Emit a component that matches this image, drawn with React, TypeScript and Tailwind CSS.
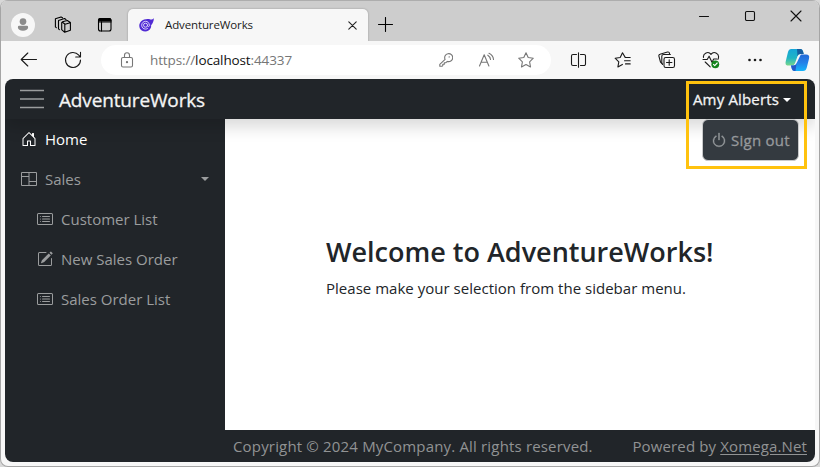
import type { ReactNode } from "react";
import { BsHouseDoor, BsColumns, BsCardList, BsPencilSquare, BsPower } from "react-icons/bs";

function Ico({ w, h, children, className = "" }: { w: number; h: number; children: ReactNode; className?: string }) {
  return (
    <svg width={w} height={h} viewBox={`0 0 ${w} ${h}`} fill="none" stroke="currentColor" strokeWidth="1.1" strokeLinecap="round" strokeLinejoin="round" className={`shrink-0 ${className}`}>
      {children}
    </svg>
  );
}

const STAR = "M8 .8l2.2 4.7 5.1.7-3.7 3.6.9 5.1L8 12.5l-4.5 2.4.9-5.1L.7 6.2l5.1-.7z";

function TabStrip() {
  return (
    <div className="flex h-[41px] shrink-0 bg-[#cdcdcd] border-t border-[#adadad]">
      <div className="ml-[10px] mt-[12px] flex size-6 items-center justify-center rounded-full bg-[#f7f7f7] text-[#8b8b8b]">
        <svg width="12" height="14" viewBox="0 0 14 16" fill="currentColor">
          <circle cx="7" cy="4" r="3.9" />
          <path d="M2.6 9h8.8A1.6 1.6 0 0 1 13 10.600c0 2.600-2.700 4-6 4s-6-1.400-6-4A1.600 1.600 0 0 1 2.600 9z" />
        </svg>
      </div>
      <Ico w={18} h={18} className="ml-[19px] mt-[15px] text-black">
        <path d="M8.500 5.800l4.800-1.300 3.100 2v7.700l-5.700 2.100-3-2.600V6.700zM8.200 6l2.800 2.200 5.200-1.500M10.800 8.500v7.600" />
        <path d="M5.400 13.600l-.9-.8V4.600l6-2.100 1.500 1M2.300 11.700l-.9-.8V2.800L7 .9l1.500.9" />
      </Ico>
      <Ico w={16} h={16} className="ml-[25px] mt-[16px] text-black">
        <rect x="1.500" y="1.500" width="12.500" height="12.500" rx="2" />
        <path d="M1 4.500V3.200A2.200 2.200 0 0 1 3.200 1h9.100a2.200 2.200 0 0 1 2.200 2.200v1.300z" fill="currentColor" stroke="none" />
        <path d="M4.500 4.500V14M1.500 5h12.500" />
      </Ico>
      <div className="ml-[15px] mt-[8px] flex h-[33px] w-[240px] items-start rounded-t-[5px] bg-[#f7f7f7] shadow-[0_0_2px_rgba(0,0,0,0.3)]">
        <svg width="16" height="14" viewBox="0 0 16 14" className="ml-[11px] mt-[9px] shrink-0">
          <path d="M14.800.200c-.9 1.100-2 1.300-3.400 1.200C8.800.5 4.500 1 2.200 3.200-.6 6-.3 10.400 2.700 12.500c3.300 2.100 7.700.9 9-2.500.5-1.200.5-2 .4-2.800 1.600-1.700 2.900-4.500 2.700-7z" fill="#512bd4" />
          <path d="M10.200 7c0-2.300-1.600-3.700-3.600-3.700S2.700 5 2.700 7.200s1.600 3.900 3.700 3.900c1 0 1.800-.3 2.400-.8M8.500 7.200a2 2 0 1 1-4 0 2 2 0 0 1 4 0zc0 2 2.300 1.500 2.200-.4" fill="none" stroke="#e8e2ff" strokeWidth=".9" />
        </svg>
        <span className="ml-[10px] mt-[7px] text-[11.500px] leading-[18px] tracking-[-0.120px] text-[#1b1b1b]">AdventureWorks</span>
        <Ico w={9} h={9} className="ml-auto mr-[11px] mt-[12px] text-[#222]">
          <path d="M.8.8l7.400 7.400M8.200.8L.8 8.200" />
        </Ico>
      </div>
      <Ico w={15} h={15} className="ml-[10px] mt-[16px] text-black">
        <path d="M7.500.500v14M.500 7.500h14" />
      </Ico>
      <div className="ml-auto mr-[17px] mt-[9px] flex text-[#111]">
        <Ico w={12} h={12} className="mr-[34px]"><path d="M1.500 6.500h9" /></Ico>
        <Ico w={12} h={12} className="mr-[34px]"><rect x="1.500" y="1.500" width="9" height="9" rx="1.200" /></Ico>
        <Ico w={12} h={12}><path d="M1 1l10 10M11 1L1 11" /></Ico>
      </div>
    </div>
  );
}

function Toolbar() {
  return (
    <div className="flex h-[38px] shrink-0 items-center bg-[#f7f7f7] text-[#1a1a1a]">
      <Ico w={18} h={16} className="ml-[19px]"><path d="M16.500 7.500H1.200M7.800 1L1.200 7.500 7.800 14" /></Ico>
      <Ico w={18} h={18} className="ml-[26px]">
        <path d="M16.500 9A7.500 7.500 0 1 1 14.800 4.200l1.400 1.600M16.500 1.200V6h-4.800" />
      </Ico>
      <div className="ml-[19px] flex h-[30px] w-[450px] items-center rounded-full bg-white text-[#777]">
        <Ico w={14} h={16} className="ml-[19px]">
          <rect x="1.500" y="5.500" width="11" height="9.500" rx="1.500" />
          <path d="M4.500 5.500V3.200a2.500 2.500 0 0 1 5 0v2.300" />
          <circle cx="7" cy="10.200" r=".6" fill="currentColor" />
        </Ico>
        <span className="ml-[16px] text-[13.500px] leading-5 tracking-[-0.120px] text-[#767676]">
          https://<span className="text-[#111]">localhost</span>:44337
        </span>
        <Ico w={14} h={14} className="ml-auto mr-[25px]">
          <path d="M6.100 6.400A4 4 0 1 1 8.300 8.400L6.700 9.800H5.300v1.500H3.800v1.300L3 13.300H.8v-2z" />
          <circle cx="10.200" cy="3.900" r=".7" fill="currentColor" stroke="none" />
        </Ico>
        <Ico w={17} h={16} className="mr-[23px]">
          <path d="M1.500 14L6.200 2.800 10.900 14M3.100 10.300h6.200" />
          <path d="M9.800 3.200q2.500 1.500 2.700 4.300M11 1.200q4.200 2 4.500 6.300" />
        </Ico>
        <Ico w={16} h={16} className="mr-[17px]"><path d={STAR} /></Ico>
      </div>
      <Ico w={17} h={16} className="ml-[19px]">
        <path d="M6.500 2.500H3a1.500 1.500 0 0 0-1.500 1.500v8A1.500 1.500 0 0 0 3 13.500h3.500M10.500 2.500H14A1.500 1.500 0 0 1 15.500 4v8a1.500 1.500 0 0 1-1.500 1.500h-3.500M8.500.800v14.400" />
      </Ico>
      <Ico w={18} h={16} className="ml-[27px]">
        <path d="M11.200 5.400L8.500.8 6.200 5.500l-5.100.7 3.700 3.600-.9 5.100 4.500-2.500M11.500 5.500h4.700M10.500 8.700h5.700M11.500 11.900h4.700" />
      </Ico>
      <Ico w={18} h={18} className="ml-[26px]">
        <path d="M4 12.500L2.500 11 .9 5.200A1.500 1.500 0 0 1 2 3.300L9.500 1a1.500 1.500 0 0 1 1.900 1.100l.3 1.400" />
        <path d="M4.500 13.500L3.800 12V5.300A1.800 1.800 0 0 1 5.600 3.500h6.700" />
        <rect x="6" y="6.500" width="10.500" height="10" rx="1.800" />
        <path d="M11.200 8.800v5.400M8.500 11.500h5.400" />
      </Ico>
      <Ico w={18} h={18} className="ml-[26px]">
        <path d="M1.500 6.500A4.200 4.200 0 0 1 9 3.300a4.200 4.200 0 0 1 7.500 3.200q0 1-.5 1.800M1 8.500h4.200l1.900-3.300 2.900 6 1.700-3.200h3.100M3.200 11l5 4.800" />
        <circle cx="13.300" cy="13.300" r="3.900" fill="#13831b" stroke="none" />
        <path d="M11.500 13.400l1.200 1.200 2.500-2.600" stroke="#fff" />
      </Ico>
      <Ico w={14} h={4} className="ml-[28px]">
        <g fill="currentColor" stroke="none"><circle cx="1.500" cy="2" r="1.300" /><circle cx="7" cy="2" r="1.300" /><circle cx="12.500" cy="2" r="1.300" /></g>
      </Ico>
      <svg width="25" height="22" viewBox="0 0 25 22" className="ml-[23px] shrink-0">
        <defs>
          <linearGradient id="left" x1="0" y1="0" x2="0" y2="1"><stop stopColor="#16a5d8" /><stop offset=".55" stopColor="#20b4c4" /><stop offset="1" stopColor="#77d68a" /></linearGradient>
          <linearGradient id="right" x1="0" y1="0" x2="0" y2="1"><stop stopColor="#2169d8" /><stop offset=".5" stopColor="#2580e8" /><stop offset="1" stopColor="#14b4fa" /></linearGradient>
        </defs>
        <path d="M6.200 0h9.100q2 0 2.700 2.200L18.700 5h-3.500q-2 0-2.700 2.200L10 14.200Q9.300 16.500 7 16.500H3.500Q-.2 16.500.7 12.500L3 3Q3.800 0 6.200 0z" fill="url(#left)" />
        <path d="M12 0h3.300q2 0 2.700 2.200L18.700 5h-3.500q-2 0-2.700 2.200z" fill="#165c9f" />
        <path d="M15.800 5.500H21q4 0 3 4.200l-2.200 8.800Q21 22 18 22H9.500q-2 0-2.700-2.300L6 16.500h2.500q2.300 0 3-2.300z" fill="url(#right)" />
        <path d="M6 16.500h2.500q2.300 0 3-2.300l-1 7.800h-1q-2 0-2.700-2.300z" fill="#2558c8" />
      </svg>
    </div>
  );
}

function Caret({ className = "" }: { className?: string }) {
  return <span className={`shrink-0 border-x-[4px] border-t-[4px] border-x-transparent ${className}`} />;
}

function NavItem({ icon, label, className }: { icon: ReactNode; label: string; className: string }) {
  return (
    <div className={`flex h-10 items-center ${className}`}>
      {icon}
      <span className="mb-px ml-2 text-[15px] leading-6">{label}</span>
    </div>
  );
}

function Sidebar() {
  return (
    <nav className="w-[220px] shrink-0 bg-[#212529] text-[#9b9d9e]">
      <NavItem icon={<BsHouseDoor size={16} />} label="Home" className="pl-4 text-white" />
      <div className="flex items-center">
        <NavItem icon={<BsColumns size={16} />} label="Sales" className="pl-4" />
        <Caret className="ml-auto mr-4 border-t-[#9b9d9e]" />
      </div>
      <NavItem icon={<BsCardList size={16} />} label="Customer List" className="pl-8" />
      <NavItem icon={<BsPencilSquare size={16} />} label="New Sales Order" className="pl-8" />
      <NavItem icon={<BsCardList size={16} />} label="Sales Order List" className="pl-8" />
    </nav>
  );
}

export default function App() {
  return (
    <div className="h-[467px] w-[820px] overflow-hidden bg-[#d8d8d8] font-['Open_Sans','Noto_Sans',sans-serif]">
      <div className="relative flex h-[467px] flex-col overflow-hidden rounded-[8px] border-x border-b border-[#a5a5a5] bg-[#f7f7f7]">
        <TabStrip />
        <Toolbar />
        <div className="mx-[4px] flex h-[383px] flex-col overflow-hidden rounded-[8px] bg-white">
          <header className="z-10 flex h-10 shrink-0 items-center bg-[#212529] text-[#f4f4f4] shadow-[0_8px_16px_rgba(0,0,0,0.15)]">
            <svg width="24" height="20" viewBox="0 0 24 20" className="ml-[15px]" stroke="#9b9d9e" strokeWidth="1.700"><path d="M0 1.500h24M0 10h24M0 18.500h24" /></svg>
            <span className="ml-[15px] pt-[2px] text-[19px] leading-7 tracking-[-0.150px] [-webkit-text-stroke:0.3px]">AdventureWorks</span>
            <span className="ml-auto text-[15px] leading-6 tracking-[0.160px] [-webkit-text-stroke:0.3px]">Amy Alberts</span>
            <Caret className="ml-1 mr-6 mt-px border-t-white" />
          </header>
          <div className="flex min-h-0 flex-1">
            <Sidebar />
            <div className="flex min-w-0 flex-1 flex-col">
              <main className="flex-1 pl-[101px] pt-[115px] text-[#212529]">
                <h1 className="whitespace-nowrap text-[27px] font-semibold leading-[36px]">Welcome to AdventureWorks!</h1>
                <p className="mt-[6px] whitespace-nowrap text-[15px] leading-6 tracking-[0.020px]">Please make your selection from the sidebar menu.</p>
              </main>
              <footer className="flex h-8 shrink-0 items-center justify-between whitespace-nowrap bg-[#212529] px-2 pb-px text-[15px] leading-6 text-[#919394]">
                <span className="tracking-[0.170px]">Copyright © 2024 MyCompany. All rights reserved.</span>
                <span className="tracking-[0.130px]">Powered by <span className="underline underline-offset-2">Xomega.Net</span></span>
              </footer>
            </div>
          </div>
        </div>
        <div className="absolute left-[701px] top-[119px] z-20 flex h-[42px] w-[97px] items-center rounded-[6px] border border-[#c9cacb] bg-[#343a40] pl-[8px] text-[#96999c]">
          <BsPower size={16} stroke="currentColor" strokeWidth={0.4} />
          <span className="ml-1 whitespace-nowrap text-[15px] leading-6 tracking-[0.250px] [-webkit-text-stroke:0.3px]">Sign out</span>
        </div>
        <div className="absolute left-[685px] top-[81px] z-30 h-[88px] w-[121px] border-[3px] border-[#ffc20e]" />
      </div>
    </div>
  );
}
